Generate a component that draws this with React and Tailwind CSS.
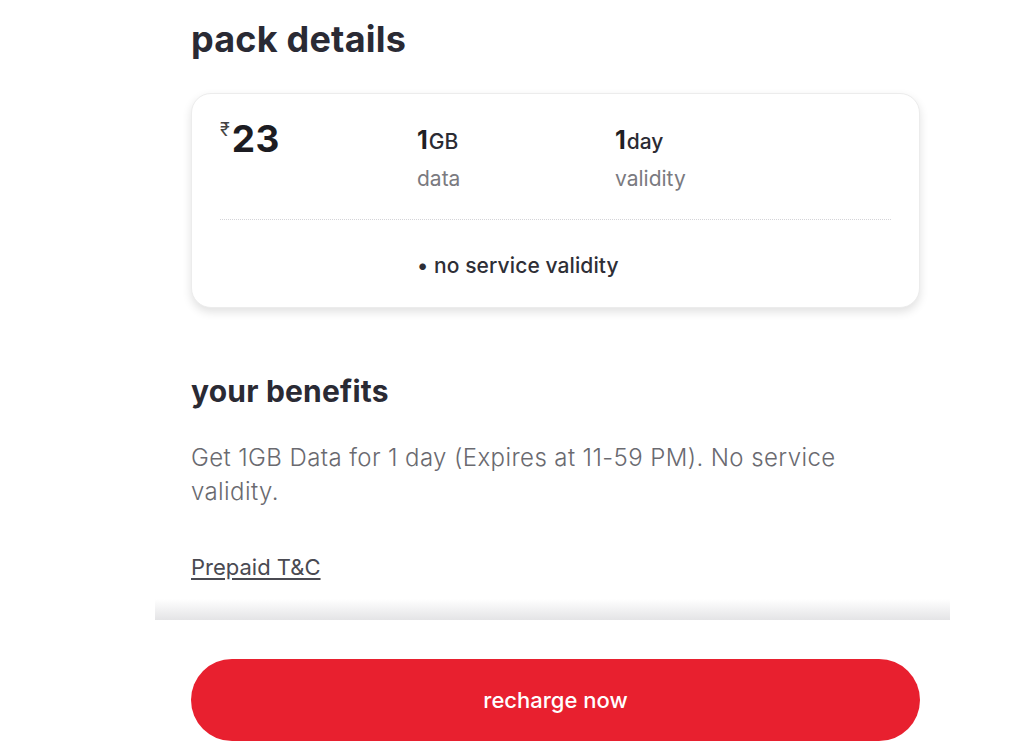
import React from "react";

const Stat = ({ value, unit, label }) => (
  <div className="flex flex-col">
    <div className="flex items-baseline leading-none">
      <span className="text-[25px] font-bold text-[#1f1f24]">{value}</span>
      <span className="text-[21px] font-medium text-[#2b2b33] ml-[1px]">{unit}</span>
    </div>
    <span className="mt-[15px] text-[21px] text-[#7a7a80] leading-none">{label}</span>
  </div>
);

const App = () => {
  return (
    <div className="w-[1024px] h-[756px] bg-white overflow-hidden font-['Inter',sans-serif] text-[#24242c]">
      <div className="ml-[191px] w-[729px]">
        <h1 className="pt-[18px] text-[36px] font-bold leading-[42px] tracking-[0.2px] text-[#2a2a34]">
          pack details
        </h1>

        {/* pack card */}
        <div className="mt-[33px] h-[215px] rounded-[20px] border border-[#ececec] bg-white shadow-[0_4px_10px_rgba(0,0,0,0.12)] px-[28px] pt-[26px]">
          <div className="flex">
            <div className="w-[197px] flex items-start">
              <span className="text-[18px] text-[#444] mt-[1px] leading-none">₹</span>
              <span className="text-[37px] font-bold leading-none text-[#1c1c22] ml-[2px] tracking-[0.5px]">23</span>
            </div>
            <div className="w-[198px] pt-[8px]">
              <Stat value="1" unit="GB" label="data" />
            </div>
            <div className="pt-[8px]">
              <Stat value="1" unit="day" label="validity" />
            </div>
          </div>
          <div className="mt-[30px] border-t border-dotted border-[#d4d4d8]" />
          <div className="mt-[35px] pl-[197px] text-[21px] font-medium text-[#2e2e36] leading-none tracking-[0.1px]">
            • no service validity
          </div>
        </div>

        <h2 className="mt-[66px] text-[30px] font-bold leading-[34px] tracking-[0.2px] text-[#2a2a34]">
          your benefits
        </h2>
        <p className="mt-[33px] w-[690px] text-[24px] font-light text-[#6a6a70] leading-[34px] tracking-[0.4px]">
          Get 1GB Data for 1 day (Expires at 11-59 PM). No service validity.
        </p>
        <a className="mt-[42px] inline-block text-[22px] text-[#4a4a52] underline underline-offset-[3px]">
          Prepaid T&amp;C
        </a>
      </div>

      {/* shadow band */}
      <div className="mt-[15px] ml-[155px] w-[795px] h-[21px] bg-gradient-to-b from-white to-[#e4e4e6]" />

      <div className="ml-[191px] w-[729px] mt-[39px]">
        <button className="w-full h-[82px] rounded-full bg-[#e8202f] text-white text-[22px] font-medium">
          recharge now
        </button>
      </div>
    </div>
  );
};

export default App;
